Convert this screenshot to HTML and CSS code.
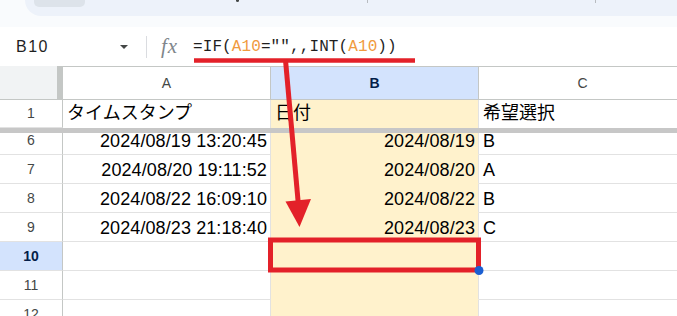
FILE: index.html
```html
<!DOCTYPE html>
<html lang="ja">
<head>
<meta charset="utf-8">
<title>Sheet</title>
<link rel="stylesheet" href="styles.css">
</head>
<body>
<div class="topstrip">
  <div class="panel">
    <div class="tab"></div>
    <span class="mark"></span>
    <span class="tick t1"></span>
    <span class="tick t2"></span>
  </div>
</div>
<div class="band"></div>
<div class="fbar">
  <div class="namebox"><span class="name">B10</span><span class="caret"></span></div>
  <div class="sep"></div>
  <span class="fx">fx</span>
  <div class="formula">=IF(<span class="ref">A10</span>="",,INT(<span class="ref">A10</span>))</div>
</div>
<div class="grid">
  <div class="row hdr">
    <div class="corner"><div class="corner-fill"></div><div class="corner-bar"></div></div>
    <div class="c h">A</div>
    <div class="c h b sel">B</div>
    <div class="c h">C</div>
  </div>
  <div class="row r1">
    <div class="rh">1</div>
    <div class="c">タイムスタンプ</div>
    <div class="c b">日付</div>
    <div class="c">希望選択</div>
  </div>
  <div class="freeze"></div>
  <div class="row r6">
    <div class="rh">6</div>
    <div class="c num">2024/08/19 13:20:45</div>
    <div class="c b num">2024/08/19</div>
    <div class="c">B</div>
  </div>
  <div class="row">
    <div class="rh">7</div>
    <div class="c num">2024/08/20 19:11:52</div>
    <div class="c b num">2024/08/20</div>
    <div class="c">A</div>
  </div>
  <div class="row">
    <div class="rh">8</div>
    <div class="c num">2024/08/22 16:09:10</div>
    <div class="c b num">2024/08/22</div>
    <div class="c">B</div>
  </div>
  <div class="row">
    <div class="rh">9</div>
    <div class="c num">2024/08/23 21:18:40</div>
    <div class="c b num">2024/08/23</div>
    <div class="c">C</div>
  </div>
  <div class="row">
    <div class="rh sel">10</div>
    <div class="c"></div>
    <div class="c b"></div>
    <div class="c"></div>
  </div>
  <div class="row">
    <div class="rh">11</div>
    <div class="c"></div>
    <div class="c b"></div>
    <div class="c"></div>
  </div>
  <div class="row">
    <div class="rh">12</div>
    <div class="c"></div>
    <div class="c b"></div>
    <div class="c"></div>
  </div>
</div>
<svg class="annot" width="677" height="316" viewBox="0 0 677 316">
  <line x1="194" y1="60.5" x2="415" y2="60.5" stroke="#e32129" stroke-width="4.5"/>
  <line x1="285.5" y1="60" x2="298.5" y2="206" stroke="#e32129" stroke-width="5"/>
  <polygon points="285.5,201.5 311,199 299.5,227" fill="#e32129"/>
  <rect x="270.5" y="240" width="208" height="30" fill="none" stroke="#e32129" stroke-width="5"/>
  <circle cx="479" cy="270.5" r="4.5" fill="#1b5fd2"/>
</svg>
</body>
</html>
```

FILE: styles.css
```css
* { box-sizing: border-box; margin: 0; padding: 0; }
html, body { width: 677px; height: 316px; overflow: hidden; background: #fff; }
body {
  font-family: "Liberation Sans", Arial, "Noto Sans CJK JP", sans-serif;
  position: relative;
  color: #000;
}
.topstrip { height: 16px; background: #f9fbfd; display: flex; }
.panel {
  flex: 1;
  margin-left: 25px;
  background: #edf2fa;
  border-bottom-left-radius: 16px;
  display: flex;
  align-items: flex-start;
}
.tab { margin-left: 9px; width: 51px; height: 7px; background: #dde3ea; border-radius: 0 0 5px 5px; }
.mark { margin-left: 151px; width: 3px; height: 2px; background: #444746; border-radius: 0 0 2px 2px; }
.tick { width: 1px; height: 3px; background: #b8bcc0; }
.t1 { margin-left: 128px; }
.t2 { margin-left: 227px; }
.band { height: 11px; background: #f9fbfd; }

.fbar { height: 39px; display: flex; align-items: center; background: #fff; }
.namebox { width: 137px; display: flex; align-items: center; padding: 0 9px 0 16px; }
.name { font-size: 16px; letter-spacing: 1.5px; color: #1f1f1f; }
.caret {
  margin-left: auto;
  width: 0; height: 0;
  border-left: 4px solid transparent;
  border-right: 4px solid transparent;
  border-top: 4px solid #444746;
}
.sep { margin-left: 9px; width: 1px; height: 22px; background: #dadce0; }
.fx {
  margin-left: 14px;
  width: 22px;
  font-family: "Liberation Serif", serif;
  font-style: italic;
  font-size: 21px;
  letter-spacing: 1px;
  color: #80868b;
}
.formula {
  margin-left: 10px;
  font-family: "Liberation Mono", monospace;
  font-size: 16px;
  letter-spacing: 0.1px;
  color: #1f1f1f;
  white-space: pre;
}
.ref { color: #f09a3e; }

.grid { display: flex; flex-direction: column; }
.row { display: flex; height: 29px; flex: none; }
.row.hdr { height: 34px; }
.row.r1 { height: 28px; }
.row.r6 { height: 22px; }

.corner { width: 63px; display: flex; border-bottom: 1px solid #c4c7c5; }
.corner-fill { width: 57px; background: #f1f3f4; }
.corner-bar { width: 6px; background: #c4c7c5; }

.rh {
  width: 63px;
  flex: none;
  display: flex;
  justify-content: center;
  align-items: flex-end;
  padding-bottom: 5px;
  font-size: 14px;
  line-height: 17px;
  color: #444746;
  border-right: 1px solid #c4c7c5;
  border-bottom: 1px solid #e2e2e2;
}
.rh.sel { background: #d3e3fd; color: #041e49; font-weight: bold; }

.c {
  width: 208px;
  flex: none;
  display: flex;
  align-items: flex-end;
  padding: 0 3px 2px 4px;
  font-size: 18px;
  line-height: 21px;
  border-right: 1px solid #e2e2e2;
  border-bottom: 1px solid #e2e2e2;
  white-space: nowrap;
}
.c.num { justify-content: flex-end; letter-spacing: 0.1px; }
.c.b { background: #fff2cc; border-bottom-color: #fff2cc; border-right-color: #e2e2e2; }
.r1 .c { border-bottom: none; padding-bottom: 4px; }

.c.h {
  justify-content: center;
  align-items: center;
  padding: 0;
  font-size: 14px;
  line-height: 17px;
  color: #444746;
  background: #fff;
  border-top: 1px solid #c4c7c5;
  border-bottom: 1px solid #c4c7c5;
  border-right-color: #c4c7c5;
}
.c.h.sel { background: #d3e3fd; color: #041e49; font-weight: bold; }

.freeze { height: 5px; background: #c7c7c7; flex: none; }

.annot { position: absolute; left: 0; top: 0; pointer-events: none; }
```
